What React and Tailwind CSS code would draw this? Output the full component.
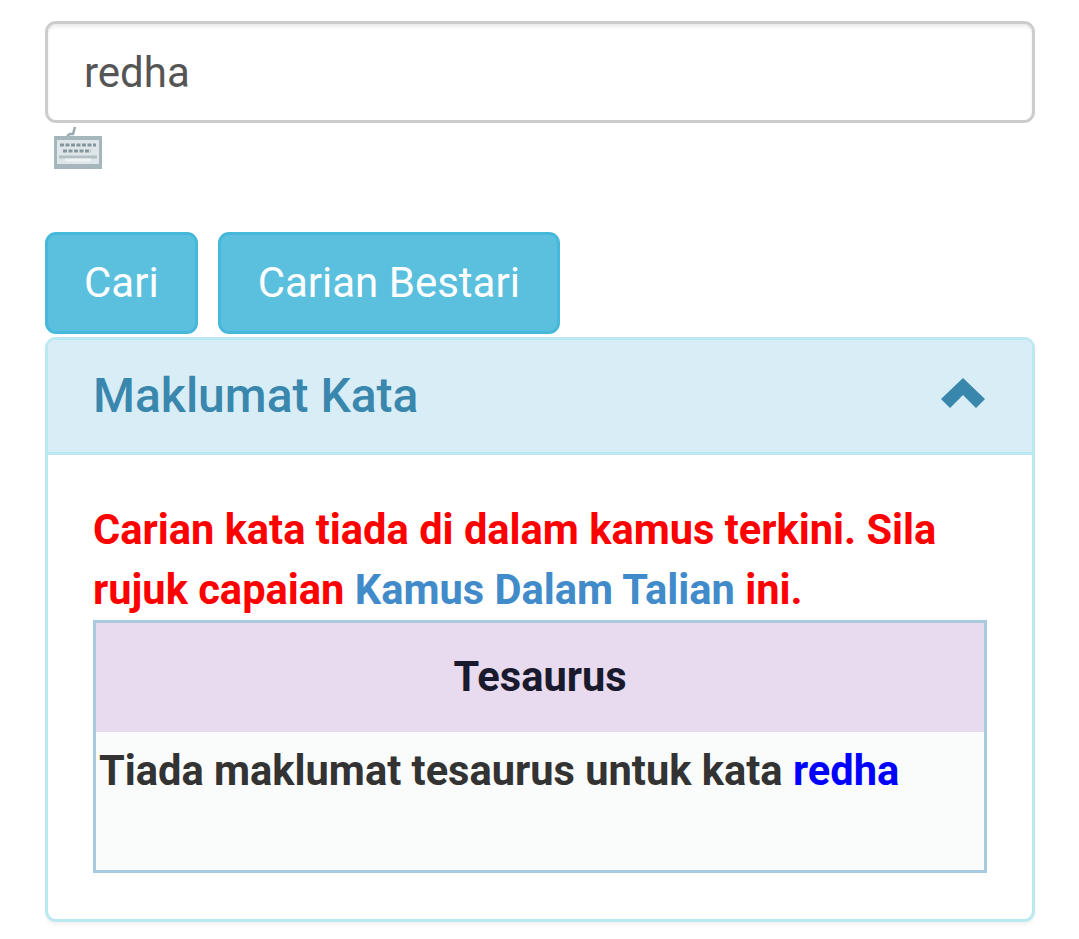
import { useState } from "react";

function IkonPapanKekunci() {
  return (
    <svg width="52" height="46" viewBox="0 0 52 46" className="block blur-[0.6px]">
      <path d="M14 11l3-2h3l2-7" fill="none" stroke="#98a9b2" strokeWidth="2.5" />
      <rect x="1" y="11" width="48" height="33" fill="#a6b6bd" />
      <rect x="4" y="15" width="42" height="24" fill="#dfe6e9" />
      <path d="M7 20h36M10 26h28" fill="none" stroke="#84979f" strokeWidth="3" strokeDasharray="4 1.5" />
      <path d="M6 32h38" fill="none" stroke="#b2c0c6" strokeWidth="3" />
      <path d="M12 35h26" fill="none" stroke="#eef2f3" strokeWidth="3" />
    </svg>
  );
}

export default function App() {
  const [kata, setKata] = useState("redha");
  const [buka, setBuka] = useState(true);

  return (
    <div className="min-h-[939px] bg-white px-[45px] pt-[21px] font-['Roboto',sans-serif]">
      <input
        type="text"
        value={kata}
        onChange={e => setKata(e.target.value)}
        className="block h-[102px] w-[990px] rounded-[11px] border-[3px] border-[#cccccc] bg-white px-[36px] text-[42px] text-[#555555] outline-none shadow-[inset_0_3px_3px_rgba(0,0,0,0.075)]"
      />
      <div className="ml-[8px] mt-[2px] h-[107px]">
        <IkonPapanKekunci />
      </div>

      <div className="flex gap-[20px]">
        <button type="button" className="h-[102px] rounded-[11px] border-[3px] border-[#46b8da] bg-[#5bc0de] px-[36px] pb-[2px] text-[42px] text-white">
          Cari
        </button>
        <button type="button" className="h-[102px] rounded-[11px] border-[3px] border-[#46b8da] bg-[#5bc0de] px-[37px] pb-[2px] text-[42px] text-white">
          Carian Bestari
        </button>
      </div>

      <div className="mt-[3px] w-[990px] overflow-hidden rounded-[11px] border-[3px] border-[#bce8f1] bg-white shadow-[0_3px_3px_rgba(0,0,0,0.05)]">
        <div
          onClick={() => setBuka(!buka)}
          className="flex h-[115px] items-center justify-between border-b-[3px] border-[#bce8f1] bg-[#d9edf7] pl-[45px] pr-[47px] text-[#3a87ad]"
        >
          <span className="text-[48px] font-medium">Maklumat Kata</span>
          <svg width="44" height="31" viewBox="0 0 44 31" className="mb-[5px] block">
            <path d="M22 0L44 21l-9 9-13-13L9 30l-9-9z" fill="#3a87ad" />
          </svg>
        </div>

        {buka && (
          <div className="px-[45px] pb-[46px] pt-[45px]">
            <p className="text-[41.6px] font-bold leading-[60px] text-[#ff0000]">
              Carian kata tiada di dalam kamus terkini. Sila rujuk capaian{" "}
              <a className="text-[#428bca]">Kamus Dalam Talian</a> ini.
            </p>
            <table className="w-[894px] border-[3px] border-[#a9c9df]">
              <tbody>
                <tr>
                  <th className="h-[110px] bg-[#e8daef] text-center text-[41.6px] font-bold text-[#1a1a2e]">Tesaurus</th>
                </tr>
                <tr>
                  <td className="h-[140px] bg-[#fafcfc] px-[3px] align-top text-[41.6px] font-bold leading-[78px] text-[#333333]">
                    Tiada maklumat tesaurus untuk kata <a className="text-[#0000ff]">redha</a>
                  </td>
                </tr>
              </tbody>
            </table>
          </div>
        )}
      </div>
    </div>
  );
}
